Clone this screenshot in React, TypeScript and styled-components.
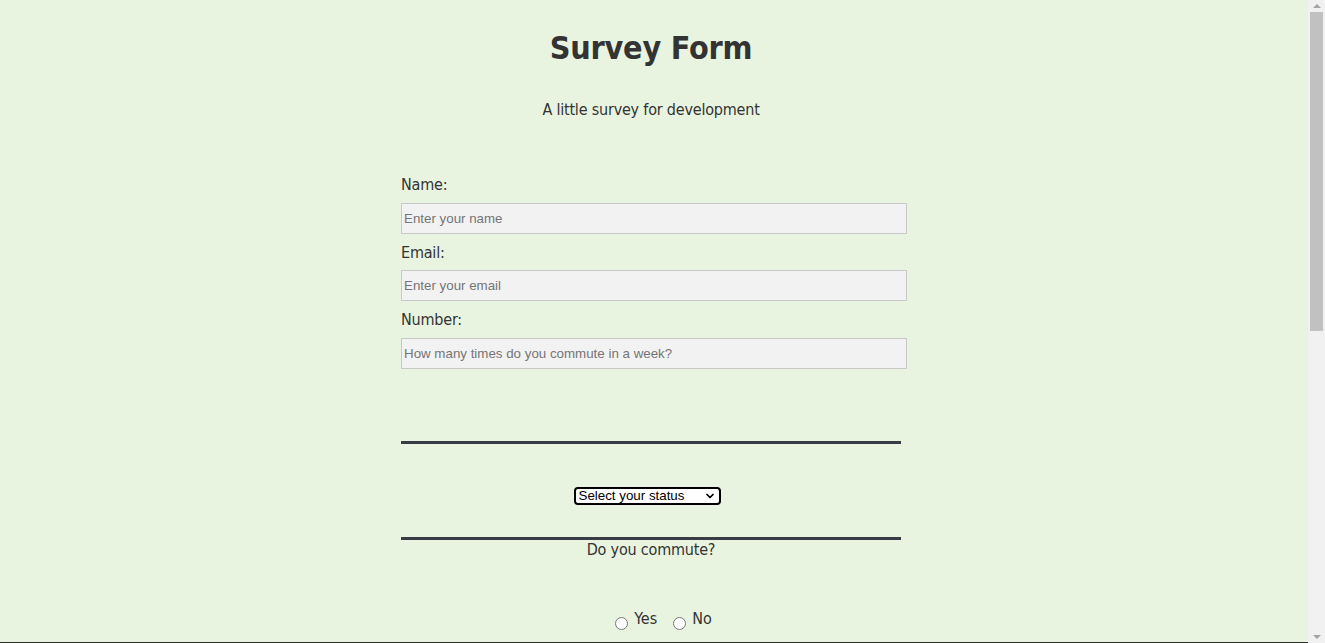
import React from "react";
import styled, { createGlobalStyle } from "styled-components";
import { ChevronDown } from "lucide-react";

const GlobalStyle = createGlobalStyle`
  html, body {
    margin: 0;
    padding: 0;
    background: #e8f4e0;
  }
  html {
    scrollbar-width: none;
  }
  html::-webkit-scrollbar {
    display: none;
  }
  body {
    font-family: "DejaVu Sans Condensed", "DejaVu Sans", sans-serif;
    color: #333333;
  }
`;

const Page = styled.main`
  padding-right: 23px;
  display: flex;
  flex-direction: column;
  align-items: center;
`;

const Title = styled.h1`
  margin: 28px 0 0;
  font-size: 32px;
  line-height: 40px;
  font-weight: bold;
  color: #333333;
  text-align: center;
  letter-spacing: -0.2px;
`;

const Subtitle = styled.p`
  margin: 33px 0 0;
  font-size: 16px;
  line-height: 18px;
  text-align: center;
  letter-spacing: -0.2px;
`;

const Form = styled.form`
  width: 500px;
  margin-top: 57px;
  display: flex;
  flex-direction: column;
`;

const Label = styled.label`
  display: block;
  font-size: 16px;
  line-height: 18px;
  margin-bottom: 8.5px;
  letter-spacing: -0.2px;
`;

const TextInput = styled.input`
  width: 100%;
  box-sizing: content-box;
  margin: 0 0 10px;
  padding: 7px 2px;
  height: 15px;
  border: 1px solid #c8c8c8;
  background: #f2f2f2;
  font-family: "Liberation Sans", Arial, sans-serif;
  font-size: 13.33px;
  line-height: 15px;
  color: #333;
  outline: none;
  &::placeholder {
    color: #757575;
  }
`;

const Divider = styled.div<{ $top: number }>`
  height: 3px;
  background: #383c44;
  margin-top: ${(p) => p.$top}px;
`;

const SelectWrap = styled.div`
  align-self: center;
  position: relative;
  margin: 43px 8px 0 0;
  width: 147px;
  height: 18px;
`;

const StatusSelect = styled.select`
  appearance: none;
  -webkit-appearance: none;
  display: block;
  width: 147px;
  height: 18px;
  box-sizing: border-box;
  border: 2px solid #000;
  border-radius: 4px;
  background: #fff;
  color: #000;
  font-family: "Liberation Sans", Arial, sans-serif;
  font-size: 13.33px;
  line-height: 14px;
  padding: 0 0 0 3px;
  margin: 0;
  outline: none;
`;

const SelectArrow = styled(ChevronDown)`
  position: absolute;
  right: 5px;
  top: 3px;
  pointer-events: none;
  color: #000;
`;

const Question = styled.p`
  margin: 1.5px 0 0;
  font-size: 16px;
  line-height: 18px;
  text-align: center;
  letter-spacing: -0.2px;
`;

const RadioRow = styled.div`
  display: flex;
  justify-content: center;
  gap: 16px;
  margin-top: 50.5px;
  padding-left: 25px;
`;

const RadioOption = styled.label`
  display: flex;
  align-items: flex-start;
  gap: 6px;
  font-size: 16px;
  line-height: 18px;
`;

const Radio = styled.input`
  width: 13px;
  height: 13px;
  margin: 7px 0 0;
`;

const Footer = styled.footer`
  width: calc(100% + 23px);
  margin-right: -23px;
  height: 584px;
  margin-top: 12px;
  background: #2b2f2c;
`;

const ScrollBar = styled.div`
  position: fixed;
  top: 0;
  right: 0;
  width: 17px;
  height: 100vh;
  background: #f1f1f1;
  display: flex;
  flex-direction: column;
  align-items: center;
`;

const ScrollButton = styled.div<{ $down?: boolean }>`
  width: 17px;
  height: 12px;
  display: flex;
  align-items: center;
  justify-content: center;
  margin-top: ${(p) => (p.$down ? "auto" : "0")};
`;

const Triangle = styled.div<{ $down?: boolean }>`
  width: 0;
  height: 0;
  border-left: 4px solid transparent;
  border-right: 4px solid transparent;
  ${(p) =>
    p.$down
      ? "border-top: 4px solid #a3a3a3;"
      : "border-bottom: 4px solid #a3a3a3;"}
`;

const Thumb = styled.div`
  width: 13px;
  height: 319px;
  background: #c1c1c1;
`;

export default function App() {
  return (
    <>
      <GlobalStyle />
      <Page>
        <Title id="title">Survey Form</Title>
        <Subtitle id="description">A little survey for development</Subtitle>
        <Form id="survey-form" onSubmit={(e) => e.preventDefault()}>
          <Label htmlFor="name">Name:</Label>
          <TextInput id="name" type="text" placeholder="Enter your name" />
          <Label htmlFor="email">Email:</Label>
          <TextInput id="email" type="email" placeholder="Enter your email" />
          <Label htmlFor="number">Number:</Label>
          <TextInput
            id="number"
            type="number"
            placeholder="How many times do you commute in a week?"
          />
          <Divider $top={62} />
          <SelectWrap>
            <StatusSelect id="dropdown" defaultValue="">
              <option value="" disabled>
                Select your status
              </option>
              <option value="student">Student</option>
              <option value="work">Working</option>
              <option value="other">Other</option>
            </StatusSelect>
            <SelectArrow size={12} strokeWidth={3.5} />
          </SelectWrap>
          <Divider $top={32} />
          <Question>Do you commute?</Question>
          <RadioRow>
            <RadioOption>
              <Radio type="radio" name="commute" value="yes" />
              Yes
            </RadioOption>
            <RadioOption>
              <Radio type="radio" name="commute" value="no" />
              No
            </RadioOption>
          </RadioRow>
        </Form>
        <Footer />
      </Page>
      <ScrollBar aria-hidden="true">
        <ScrollButton>
          <Triangle />
        </ScrollButton>
        <Thumb />
        <ScrollButton $down>
          <Triangle $down />
        </ScrollButton>
      </ScrollBar>
    </>
  );
}
